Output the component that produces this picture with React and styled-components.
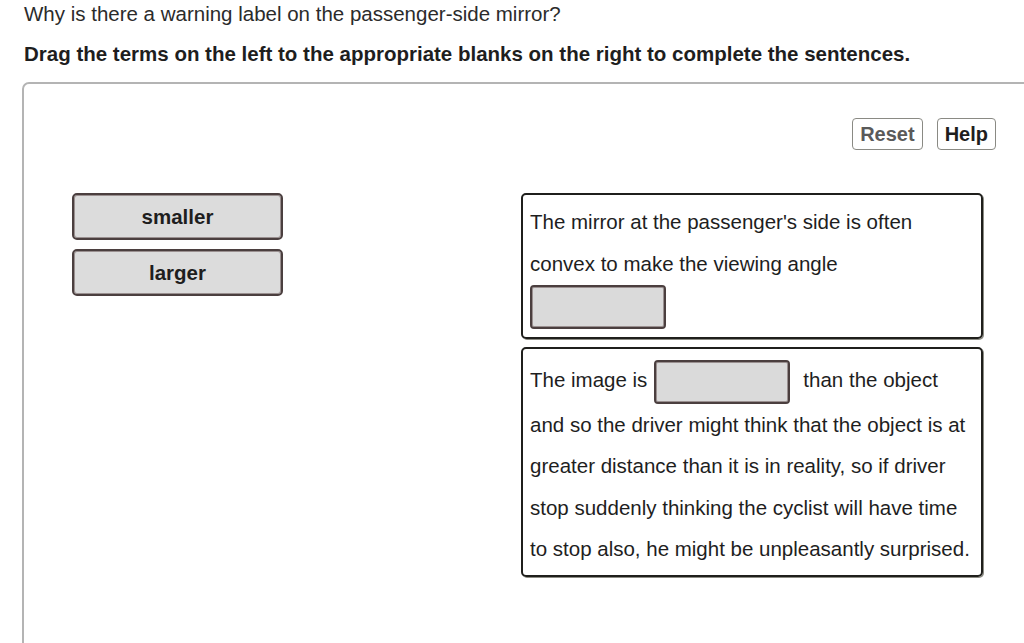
import React from "react";
import styled, { createGlobalStyle } from "styled-components";

const GlobalStyle = createGlobalStyle`
  html, body {
    margin: 0;
    padding: 0;
    background: #ffffff;
    overflow: hidden;
  }
  body {
    font-family: "Liberation Sans", Arial, sans-serif;
    color: #222;
  }
`;

const Page = styled.div`
  width: 1024px;
  height: 643px;
  overflow: hidden;
`;

const Question = styled.p`
  margin: 0;
  padding: 2px 0 0 24px;
  font-size: 20.5px;
  line-height: 24px;
  color: #2b2b2b;
`;

const Instruction = styled.p`
  margin: 16px 0 0 24px;
  font-size: 20.5px;
  line-height: 24px;
  font-weight: bold;
  color: #1e1e1e;
`;

const Panel = styled.section`
  margin: 16px 0 0 22px;
  width: 1040px;
  height: 620px;
  border: 2px solid #b4b4b4;
  border-radius: 7px;
  box-sizing: border-box;
`;

const Toolbar = styled.div`
  display: flex;
  justify-content: flex-end;
  gap: 14px;
  width: 924px;
  margin: 34px 0 0 48px;
`;

const ToolButton = styled.button`
  height: 32px;
  padding: 0 7px;
  border: 1.5px solid #8a8a84;
  border-radius: 4px;
  background: #ffffff;
  font-family: "Liberation Sans", Arial, sans-serif;
  font-size: 20px;
  font-weight: bold;
  color: ${(p) => (p.$muted ? "#5a5a5a" : "#1e1e1e")};
  cursor: pointer;
`;

const Workspace = styled.div`
  display: grid;
  grid-template-columns: 211px 462px;
  column-gap: 238px;
  align-items: start;
  margin: 43px 0 0 48px;
`;

const TermList = styled.div`
  display: flex;
  flex-direction: column;
  gap: 9px;
`;

const Term = styled.div`
  height: 47px;
  box-sizing: border-box;
  border: 2px solid #4b3f3f;
  border-radius: 5px;
  box-shadow: inset 0 0 0 1px #9a9090;
  background: #dcdcdc;
  display: flex;
  align-items: center;
  justify-content: center;
  font-size: 20.5px;
  font-weight: bold;
  color: #1e1e1e;
`;

const Sentences = styled.div`
  display: flex;
  flex-direction: column;
  gap: 8px;
`;

const SentenceBox = styled.div`
  box-sizing: border-box;
  height: ${(p) => p.$h}px;
  border: 2px solid #1f1f1c;
  border-radius: 5px;
  box-shadow: 1px 1px 0 #8c8c84;
  padding: ${(p) => p.$pt}px 6px 0 7px;
  font-size: 20.5px;
  line-height: 41.5px;
  color: #1e1e1e;
`;

const Blank = styled.span`
  display: inline-block;
  width: 136px;
  height: 44px;
  box-sizing: border-box;
  vertical-align: middle;
  border: 2px solid #4b3f3f;
  border-radius: 4px;
  box-shadow: inset 0 0 0 1px #9a9090;
  background: #dadada;
  margin: ${(p) => p.$m || "0"};
`;

export default function App() {
  return (
    <Page>
      <GlobalStyle />
      <Question>Why is there a warning label on the passenger-side mirror?</Question>
      <Instruction>
        Drag the terms on the left to the appropriate blanks on the right to complete the sentences.
      </Instruction>
      <Panel>
        <Toolbar>
          <ToolButton $muted>Reset</ToolButton>
          <ToolButton>Help</ToolButton>
        </Toolbar>
        <Workspace>
          <TermList>
            <Term>smaller</Term>
            <Term>larger</Term>
          </TermList>
          <Sentences>
            <SentenceBox $h={146} $pt={6}>
              The mirror at the passenger's side is often
              <br />
              convex to make the viewing angle
              <br />
              <Blank />
            </SentenceBox>
            <SentenceBox $h={230} $pt={10}>
              The image is<Blank $m="0 13px 0 7px" />than the object
              <br />
              and so the driver might think that the object is at
              <br />
              greater distance than it is in reality, so if driver
              <br />
              stop suddenly thinking the cyclist will have time
              <br />
              to stop also, he might be unpleasantly surprised.
            </SentenceBox>
          </Sentences>
        </Workspace>
      </Panel>
    </Page>
  );
}
